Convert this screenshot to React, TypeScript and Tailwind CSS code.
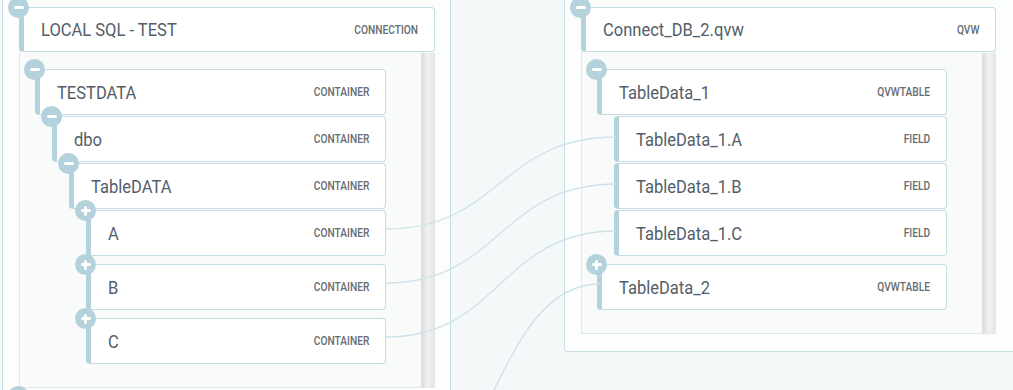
import React from 'react'

type TreeNode = {
  name: string
  kind: string
  open?: boolean
  leaf?: boolean
  children?: TreeNode[]
}

const source: TreeNode = {
  name: 'LOCAL SQL - TEST',
  kind: 'connection',
  open: true,
  children: [
    {
      name: 'TESTDATA',
      kind: 'container',
      open: true,
      children: [
        {
          name: 'dbo',
          kind: 'container',
          open: true,
          children: [
            {
              name: 'TableDATA',
              kind: 'container',
              open: true,
              children: [
                { name: 'A', kind: 'container' },
                { name: 'B', kind: 'container' },
                { name: 'C', kind: 'container' },
              ],
            },
          ],
        },
      ],
    },
  ],
}

const nextSource: TreeNode = { name: '', kind: '', open: false }

const target: TreeNode = {
  name: 'Connect_DB_2.qvw',
  kind: 'qvw',
  open: true,
  children: [
    {
      name: 'TableData_1',
      kind: 'qvwtable',
      open: true,
      children: [
        { name: 'TableData_1.A', kind: 'field', leaf: true },
        { name: 'TableData_1.B', kind: 'field', leaf: true },
        { name: 'TableData_1.C', kind: 'field', leaf: true },
      ],
    },
    { name: 'TableData_2', kind: 'qvwtable' },
  ],
}

// lineage links drawn over both trees
const links = [
  'M386 229 C500 229 500 137 616 137',
  'M386 283 C500 283 500 184 616 184',
  'M386 337 C500 337 500 231 616 231',
  'M386 500 C493 500 493 284 600 284',
]

function Toggle({ open }: { open: boolean }) {
  return (
    <span className="absolute -left-[11px] -top-[10px] z-10 flex h-[21px] w-[21px] items-center justify-center rounded-full bg-[#b3d2db]">
      <span className="absolute h-[3px] w-[10px] rounded-full bg-white" />
      {!open && <span className="absolute h-[10px] w-[3px] rounded-full bg-white" />}
    </span>
  )
}

function NodeBox({ node, head = false }: { node: TreeNode; head?: boolean }) {
  return (
    <div className="relative">
      {!node.leaf && <Toggle open={!!node.open} />}
      <div
        className={`flex items-center justify-between rounded-[4px] border border-l-[5px] border-[#c3dbe2] border-l-[#b3d2db] bg-white pl-[17px] pr-[16px] ${
          head ? 'h-[45px]' : 'h-[46px]'
        }`}
      >
        <span className="inline-block origin-left scale-x-[0.87] whitespace-nowrap text-[19px] leading-none text-[#535e69]">
          {node.name}
        </span>
        <span className="inline-block origin-right scale-x-[0.85] text-[12px] font-medium uppercase leading-none text-[#676c71]">
          {node.kind}
        </span>
      </div>
    </div>
  )
}

function Branch({ nodes }: { nodes: TreeNode[] }) {
  return (
    <>
      {nodes.map((n, i) => (
        <div key={n.name} className={i === 0 || n.leaf ? 'mt-[1px]' : 'mt-[8px]'}>
          <NodeBox node={n} />
          {n.open && n.children && (
            <div className="pl-[17px]">
              <Branch nodes={n.children} />
            </div>
          )}
        </div>
      ))}
    </>
  )
}

function Connection({ node }: { node: TreeNode }) {
  return (
    <div>
      <NodeBox node={node} head />
      {node.open && node.children && (
        <div className="flex border-b border-l border-[#e1e9ec] bg-[#f9fbfb]">
          <div className="flex-1 pb-[23px] pl-[15px] pr-[35px] pt-[16px]">
            <Branch nodes={node.children} />
          </div>
          <div className="mt-[1px] w-[14px] bg-linear-to-r from-[#dadada] via-[#f1f1f1] to-[#e4e4e4]" />
        </div>
      )}
    </div>
  )
}

export default function App() {
  return (
    <div className="relative flex h-[390px] w-[1013px] items-start overflow-hidden bg-[#f4f8f9] font-['Roboto',sans-serif]">
      <div className="ml-[2px] flex w-[449px] flex-col self-stretch overflow-hidden border-x border-[#c7dee5] bg-[#fcfdfd] pl-[16px] pr-[15px] pt-[7px]">
        <Connection node={source} />
        <div className="mt-[8px]">
          <Connection node={nextSource} />
        </div>
      </div>

      <div className="ml-[113px] w-[449px] rounded-bl-[3px] border-b border-l border-[#c7dee5] bg-[#fcfdfd] pb-[17px] pl-[16px] pr-[17px] pt-[7px]">
        <Connection node={target} />
      </div>

      <svg className="pointer-events-none absolute inset-0" width="1013" height="390" fill="none">
        {links.map(d => (
          <path key={d} d={d} stroke="#cde3e9" strokeWidth="1.3" />
        ))}
      </svg>
    </div>
  )
}
